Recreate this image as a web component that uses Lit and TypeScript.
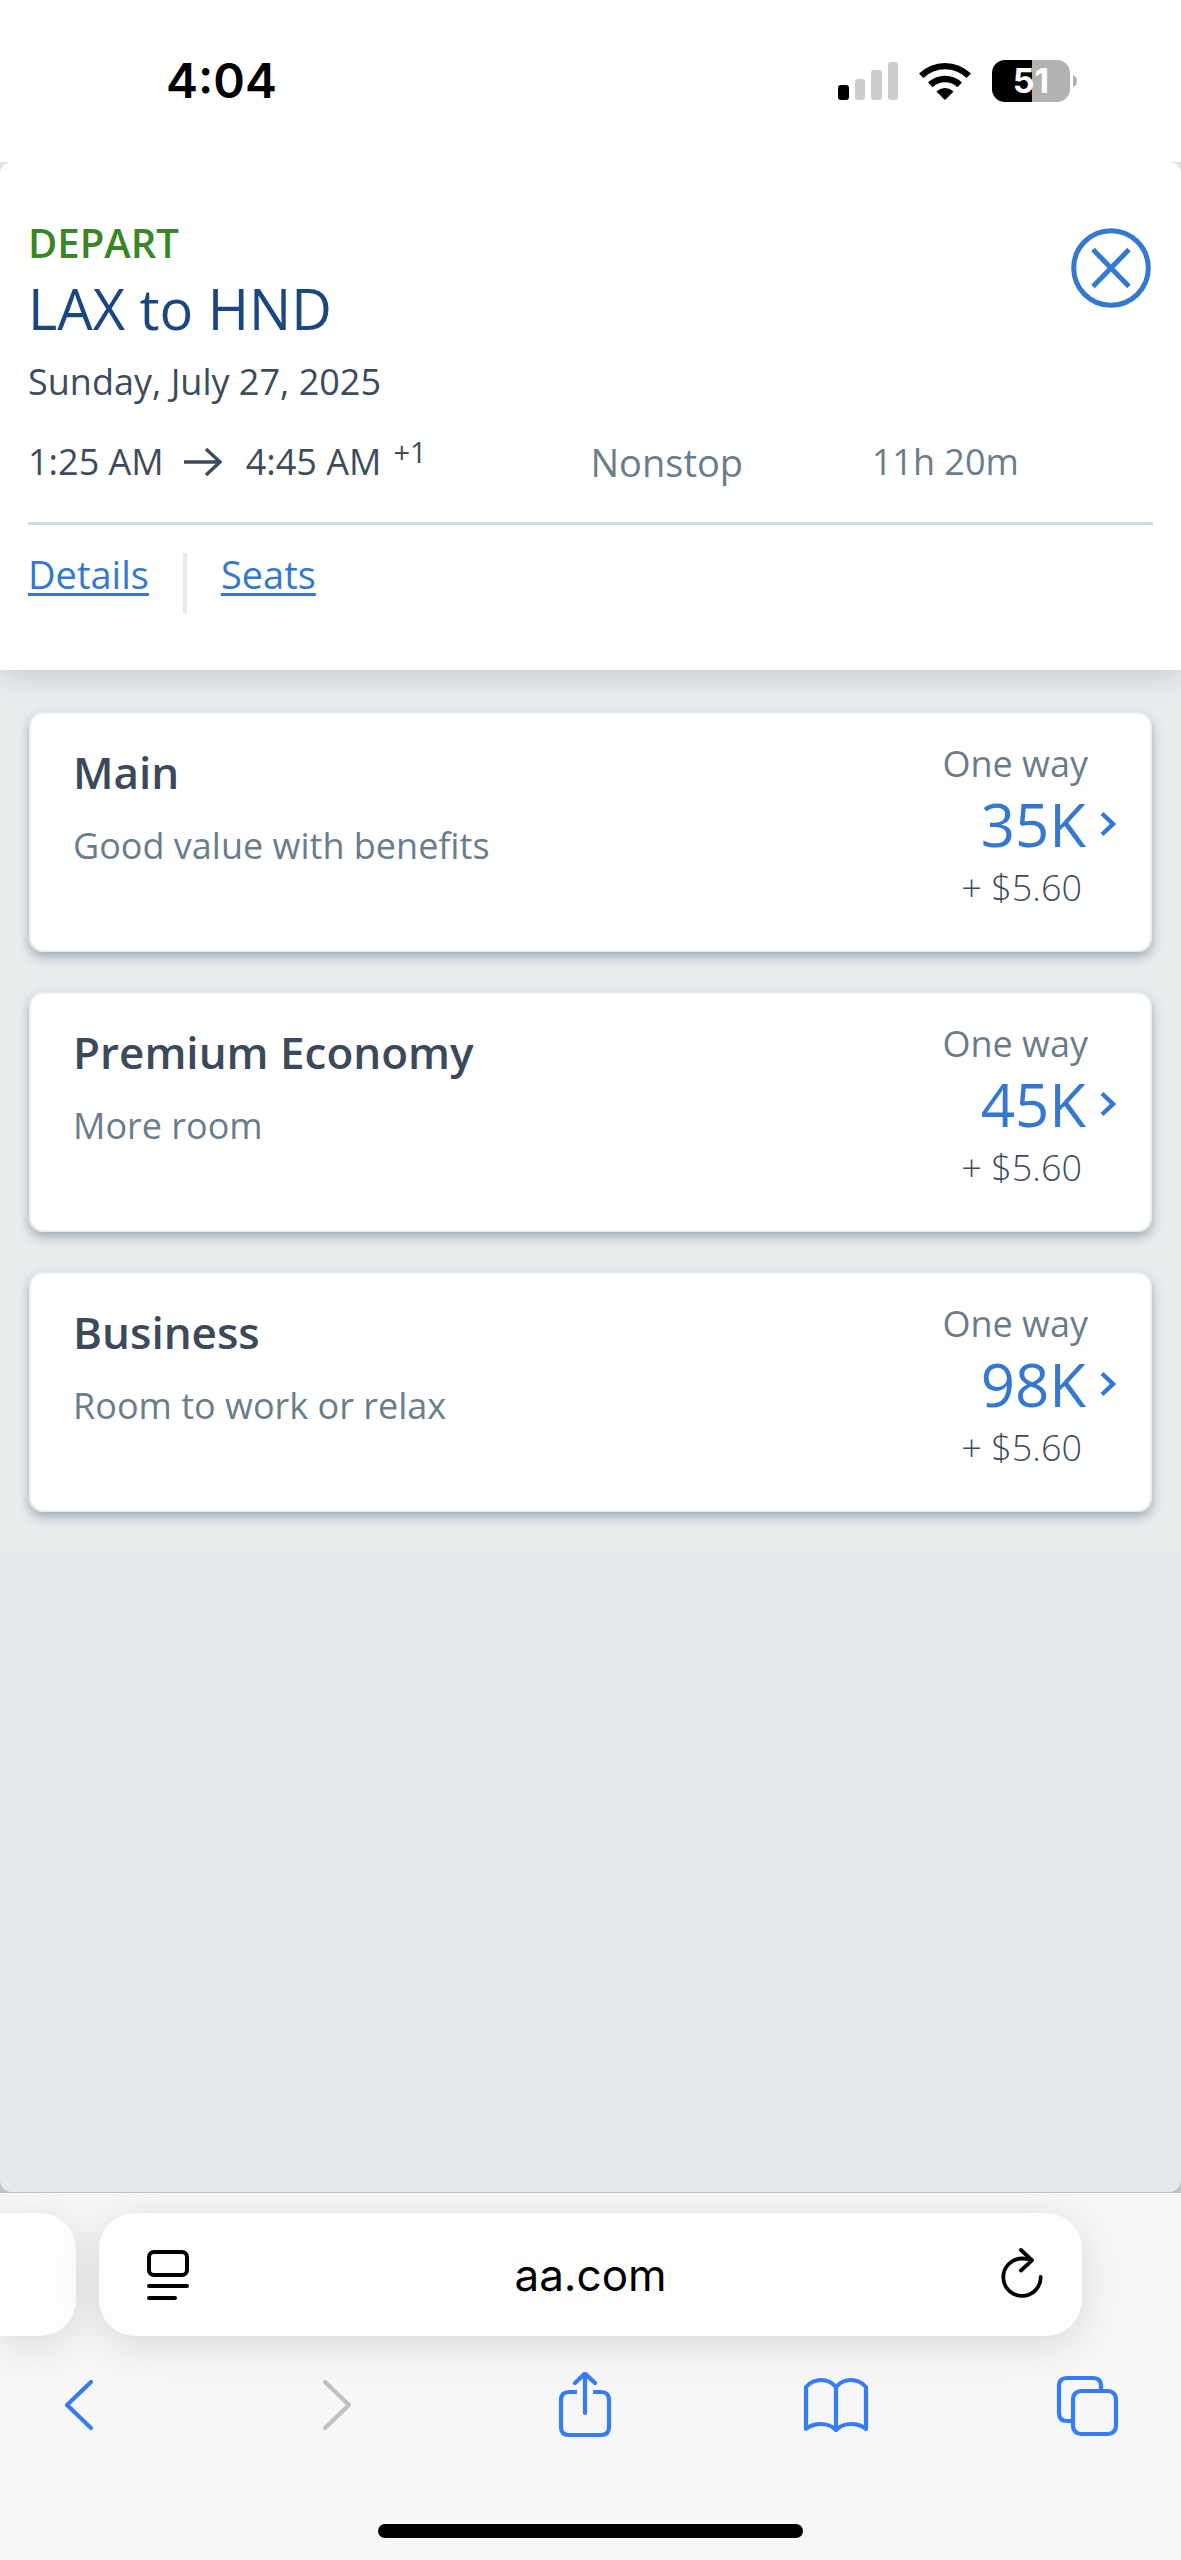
import { LitElement, html, css, svg } from "lit";
import { customElement, property } from "lit/decorators.js";

interface Fare {
  name: string;
  note: string;
  miles: string;
  fees: string;
}

const FARES: Fare[] = [
  { name: "Main", note: "Good value with benefits", miles: "35K", fees: "+ $5.60" },
  { name: "Premium Economy", note: "More room", miles: "45K", fees: "+ $5.60" },
  { name: "Business", note: "Room to work or relax", miles: "98K", fees: "+ $5.60" },
];

@customElement("status-bar")
class StatusBar extends LitElement {
  static styles = css`
    :host {
      display: flex;
      align-items: center;
      justify-content: space-between;
      height: 162px;
      padding: 0 104px 0 166px;
      box-sizing: border-box;
      background: #fff;
      font-family: Inter, "Liberation Sans", sans-serif;
    }
    .time {
      font-size: 48px;
      line-height: 56px;
      font-weight: 600;
      color: #000;
    }
    .indicators {
      display: flex;
      align-items: center;
      gap: 20px;
    }
    svg {
      display: block;
    }
    .battery {
      display: flex;
      align-items: center;
      gap: 3px;
    }
    .cell {
      width: 78px;
      height: 42px;
      border-radius: 13px;
      background: linear-gradient(to right, #000 51%, #b2b2b2 51%);
      color: #fff;
      font-size: 34px;
      line-height: 42px;
      font-weight: 700;
      text-align: center;
    }
  `;

  render() {
    return html`
      <span class="time">4:04</span>
      <div class="indicators">
        <svg width="60" height="40" viewBox="0 0 60 40" aria-label="Signal">
          <rect x="0" y="24" width="11" height="15" rx="3" fill="#000" />
          <rect x="17" y="18" width="10" height="21" rx="3" fill="#ccc" />
          <rect x="33" y="9" width="11" height="30" rx="3" fill="#ccc" />
          <rect x="50" y="1" width="10" height="38" rx="3" fill="#ccc" />
        </svg>
        <svg width="54" height="40" viewBox="0 0 54 40" aria-label="Wi-Fi">
          <path d="M1 12.6 A37 37 0 0 1 53 12.6 L48.6 17 A31 31 0 0 0 5.4 17 Z" />
          <path d="M10 21.6 A24.4 24.4 0 0 1 44 21.6 L39.4 26.2 A18 18 0 0 0 14.6 26.2 Z" />
          <path d="M19 30.6 A12 12 0 0 1 35 30.6 L27 38.6 Z" stroke="#000" stroke-width="1" stroke-linejoin="round" />
        </svg>
        <div class="battery">
          <div class="cell">51</div>
          <svg width="4" height="12" viewBox="0 0 4 12">
            <path d="M0 0 Q4 1.5 4 6 Q4 10.5 0 12 Z" fill="#b2b2b2" />
          </svg>
        </div>
      </div>
    `;
  }
}

@customElement("flight-header")
class FlightHeader extends LitElement {
  static styles = css`
    :host {
      display: block;
      padding: 59px 28px 57px;
      background: #fff;
      box-shadow: 0 4px 28px rgba(60, 75, 90, 0.24);
      color: #3d4c5c;
    }
    .top {
      display: flex;
      justify-content: space-between;
      align-items: flex-start;
    }
    .leg {
      margin: 0;
      font-size: 40px;
      line-height: 44px;
      font-weight: 600;
      color: #398528;
    }
    .route {
      margin: 0;
      padding: 5px 0 10px;
      font-size: 56px;
      line-height: 76px;
      font-weight: 400;
      color: #1b4780;
    }
    .date {
      margin: 0;
      font-size: 36px;
      line-height: 52px;
    }
    .close {
      margin: 7px 2px 0 0;
      padding: 0;
      border: 0;
      background: none;
      line-height: 0;
    }
    .summary {
      display: grid;
      grid-template-columns: 2fr 1fr 1fr;
      padding: 30px 0 36px;
      border-bottom: 3px solid #d1dae0;
      font-size: 38px;
      line-height: 48px;
      color: #6a7d8b;
    }
    .times {
      display: flex;
      align-items: center;
      font-size: 36px;
      color: #3d4c5c;
    }
    .duration {
      font-size: 36px;
    }
    .arrow {
      margin: 0 24px 0 20px;
    }
    .plus {
      align-self: flex-start;
      margin-left: 12px;
      font-size: 29px;
      line-height: 28px;
    }
    .links {
      display: flex;
      gap: 34px;
      padding-top: 28px;
      font-size: 38px;
      line-height: 42px;
    }
    a {
      color: #3578d0;
      text-decoration-thickness: 3px;
      text-underline-offset: 4px;
    }
    .bar {
      width: 4px;
      height: 60px;
      background: #e6e9ef;
    }
  `;

  render() {
    return html`
      <div class="top">
        <div>
          <p class="leg">DEPART</p>
          <h1 class="route">LAX to HND</h1>
          <p class="date">Sunday, July 27, 2025</p>
        </div>
        <button class="close" aria-label="Close">
          <svg width="80" height="80" viewBox="0 0 80 80" fill="none" stroke="#3578d0" stroke-width="5">
            <circle cx="40" cy="40" r="37.3" />
            <path d="M22 21.5 L58 58.5 M58 21.5 L22 58.5" />
          </svg>
        </button>
      </div>
      <div class="summary">
        <div class="times">
          <span>1:25 AM</span>
          <svg class="arrow" width="38" height="30" viewBox="0 0 38 30" fill="none" stroke="#3d4c5c" stroke-width="3.4">
            <path d="M0 15 H36 M22 2 L36 15 L22 28" />
          </svg>
          <span>4:45 AM</span>
          <span class="plus">+1</span>
        </div>
        <span>Nonstop</span>
        <span class="duration">11h 20m</span>
      </div>
      <nav class="links">
        <a href="#details">Details</a>
        <span class="bar"></span>
        <a href="#seats">Seats</a>
      </nav>
    `;
  }
}

@customElement("fare-card")
class FareCard extends LitElement {
  @property({ attribute: false }) fare!: Fare;

  static styles = css`
    :host {
      display: flex;
      justify-content: space-between;
      align-items: flex-start;
      min-height: 240px;
      padding: 28px 34px 20px 42px;
      box-sizing: border-box;
      border: 2px solid #eaeeef;
      border-radius: 14px;
      background: #fff;
      box-shadow: 0 5px 12px rgba(60, 75, 95, 0.42);
    }
    .name {
      margin: 0;
      font-size: 44px;
      line-height: 60px;
      font-weight: 600;
      color: #3c495a;
    }
    .note {
      margin: 0;
      padding-top: 20px;
      font-size: 36px;
      line-height: 48px;
      color: #6a7d8b;
    }
    .price {
      display: grid;
      grid-template-columns: auto 16px;
      column-gap: 12px;
      align-items: center;
      justify-items: end;
      padding: 0;
      border: 0;
      background: none;
      font: inherit;
      text-align: right;
    }
    .way {
      grid-column: 1;
      font-size: 36px;
      line-height: 44px;
      color: #6a7d8b;
    }
    .miles {
      grid-column: 1;
      padding-right: 2px;
      font-size: 60px;
      line-height: 76px;
      color: #3578d0;
    }
    .fees {
      grid-column: 1;
      padding-right: 6px;
      font-size: 36px;
      line-height: 52px;
      font-weight: 300;
      color: #3d4c5c;
    }
  `;

  render() {
    const { name, note, miles, fees } = this.fare;
    return html`
      <div>
        <h2 class="name">${name}</h2>
        <p class="note">${note}</p>
      </div>
      <button class="price">
        <span class="way">One way</span>
        <span class="miles">${miles}</span>
        <svg width="16" height="26" viewBox="0 0 16 26" fill="none" stroke="#3578d0" stroke-width="4.4">
          <path d="M2 2.5 L13 13 L2 23.5" />
        </svg>
        <span class="fees">${fees}</span>
      </button>
    `;
  }
}

const TOOLS = [
  { label: "Back", off: false, art: svg`<path d="M46 10 L22 33 L46 56" />` },
  { label: "Forward", off: true, art: svg`<path d="M28 10 L52 33 L28 56" />` },
  {
    label: "Share",
    off: false,
    art: svg`<path d="M28 20 H20 Q12 20 12 28 V55 Q12 63 20 63 H52 Q60 63 60 55 V28 Q60 20 52 20 H44" stroke-linecap="butt" /><path d="M36 41 V2 M26 11 L36 1.5 L46 11" />`,
  },
  {
    label: "Bookmarks",
    off: false,
    art: svg`<path d="M35 15 Q29 8 20.5 8 Q11 8 5 15 V57 Q11 52 20 52 Q29 52 35 58 Q41 52 50 52 Q59 52 65 57 V15 Q59 8 49.5 8 Q41 8 35 15 V58" />`,
  },
  {
    label: "Tabs",
    off: false,
    art: svg`<path d="M48 18 V14 Q48 6 40 6 H14 Q6 6 6 14 V41 Q6 49 14 49 H19" stroke-linecap="butt" /><rect x="20" y="19" width="43" height="43" rx="8" />`,
  },
];

@customElement("browser-bar")
class BrowserBar extends LitElement {
  static styles = css`
    :host {
      display: block;
      border-top: 1px solid #c0c2c5;
      background: #f7f7f7;
      overflow: hidden;
      font-family: Inter, "Liberation Sans", sans-serif;
    }
    .tabs {
      display: grid;
      grid-template-columns: 76px 1fr 76px;
      gap: 23px;
      padding-top: 20px;
    }
    .neighbour,
    .field {
      height: 123px;
      background: #fdfdfd;
      box-shadow: 0 8px 44px rgba(0, 0, 0, 0.13);
    }
    .neighbour {
      border-radius: 0 36px 36px 0;
    }
    .field {
      display: flex;
      align-items: center;
      justify-content: space-between;
      padding: 0 38px 0 48px;
      border-radius: 36px;
    }
    .icon {
      padding: 0;
      border: 0;
      background: none;
      line-height: 0;
    }
    .address {
      flex: 1;
      min-width: 0;
      margin-right: 8px;
      padding: 0;
      border: 0;
      outline: 0;
      background: none;
      font-family: inherit;
      font-size: 44px;
      line-height: 56px;
      text-align: center;
      color: #000;
    }
    .tools {
      display: flex;
      justify-content: space-between;
      padding: 36px 60px 0 45px;
    }
    .home {
      width: 36%;
      height: 14px;
      margin: 84px auto 22px;
      border-radius: 7px;
      background: #000;
    }
  `;

  render() {
    return html`
      <div class="tabs">
        <div class="neighbour"></div>
        <div class="field">
          <button class="icon" aria-label="Page menu">
            <svg width="42" height="52" viewBox="0 0 42 52" fill="none" stroke="#000" stroke-width="4" stroke-linecap="round">
              <rect x="2" y="3" width="38" height="23" rx="5" />
              <path d="M2 37 H40 M2 49 H28" />
            </svg>
          </button>
          <input class="address" aria-label="Address" value="aa.com" />
          <button class="icon" aria-label="Reload">
            <svg width="44" height="54" viewBox="0 0 44 54" fill="none" stroke="#000" stroke-width="3.8" stroke-linecap="round" stroke-linejoin="round">
              <path d="M40.7 29 A18.7 18.7 0 1 1 22 10.5 Q27 10.5 31.5 12" />
              <path d="M21 2 L32 12.3 L21 22.5" />
            </svg>
          </button>
        </div>
      </div>
      <div class="tools">
        ${TOOLS.map(
          (t) => html`
            <button class="icon" aria-label=${t.label} ?disabled=${t.off}>
              <svg width="68" height="68" viewBox="0 0 68 68" fill="none" stroke=${t.off ? "#bfbfbf" : "#357cf6"} stroke-width="4.2" stroke-linecap="round" stroke-linejoin="round">
                ${t.art}
              </svg>
            </button>
          `,
        )}
      </div>
      <div class="home"></div>
    `;
  }
}

@customElement("app-root")
class AppRoot extends LitElement {
  static styles = css`
    :host {
      display: flex;
      flex-direction: column;
      min-height: 100vh;
      font-family: "Open Sans", "Noto Sans", sans-serif;
    }
    .frame {
      display: grid;
      flex: 1;
      background: linear-gradient(#e0e1e6 50%, #c0c2c5 50%);
    }
    .page {
      display: flex;
      flex-direction: column;
      border-radius: 12px;
      background: #e5e9ee;
      overflow: hidden;
    }
    .head {
      position: relative;
    }
    .fares {
      display: grid;
      gap: 40px;
      padding: 42px 29px 40px;
      background: #e9edee;
    }
  `;

  render() {
    return html`
      <status-bar></status-bar>
      <div class="frame">
        <main class="page">
          <flight-header class="head"></flight-header>
          <section class="fares">
            ${FARES.map((f) => html`<fare-card .fare=${f}></fare-card>`)}
          </section>
        </main>
      </div>
      <browser-bar></browser-bar>
    `;
  }
}
